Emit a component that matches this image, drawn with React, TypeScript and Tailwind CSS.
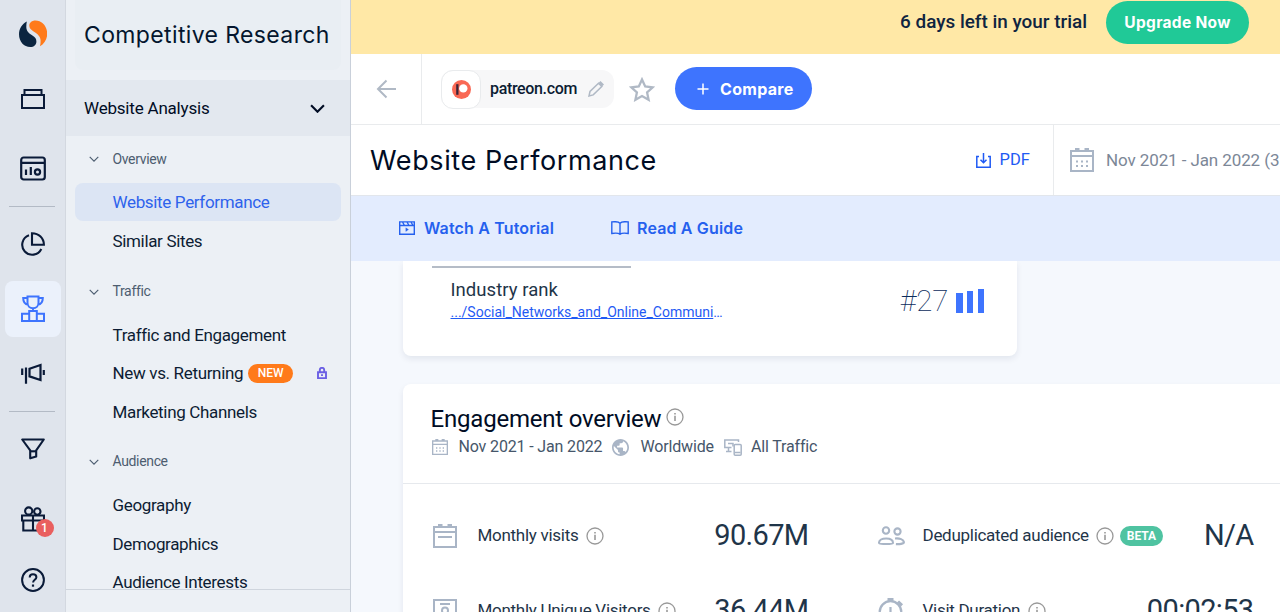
import type { ReactNode } from "react";
import clsx from "clsx";

interface IconProps {
  className?: string;
}

interface NavItem {
  label: string;
  active?: boolean;
  isNew?: boolean;
  locked?: boolean;
}

interface NavSection {
  title: string;
  spacing: string;
  items: NavItem[];
}

const sections: NavSection[] = [
  {
    title: "Overview",
    spacing: "mt-[4px]",
    items: [{ label: "Website Performance", active: true }, { label: "Similar Sites" }],
  },
  {
    title: "Traffic",
    spacing: "mt-[13px]",
    items: [
      { label: "Traffic and Engagement" },
      { label: "New vs. Returning", isNew: true, locked: true },
      { label: "Marketing Channels" },
    ],
  },
  {
    title: "Audience",
    spacing: "mt-[12px]",
    items: [{ label: "Geography" }, { label: "Demographics" }, { label: "Audience Interests" }],
  },
];

function LogoIcon() {
  return (
    <svg className="h-7 w-7" viewBox="0 0 28 28">
      <path d="M7.8 1.6C3 4.2 0 9 0 14.2 0 21.6 5 27 11.3 27c3.600 0 6.100-2.400 6.100-5.600 0-2.600-1.400-4.200-4-5.900C9.500 13 7.300 10.800 7.300 7c0-2 .2-3.700.5-5.400z" fill="#0b2540" />
      <path d="M21 26.300c4.300-2.500 7.200-7 7.200-12.500C28.200 6 22.900.4 16.400.4c-3.500 0-6.100 2.100-6.100 5.200 0 2.700 1.400 4 4.300 6 4.500 3 7 5 7 9.200 0 2-.1 3.700-.6 5.500z" fill="#ff7a1a" />
    </svg>
  );
}

function HomeIcon() {
  return (
    <svg className="h-6 w-6" viewBox="0 0 24 24" fill="none" stroke="#0a1a38" strokeWidth="2">
      <path d="M1 8h22v13H1zM3.500 8V3h17v5" />
    </svg>
  );
}

function DashboardIcon() {
  return (
    <svg className="h-[26px] w-[26px]" viewBox="0 0 26 26" fill="none" stroke="#0a1a38" strokeWidth="2.200">
      <rect x="1.200" y="2.500" width="23.600" height="22" rx="2.500" />
      <path d="M1 7.800h24M6 14.500V20M10.800 12v8" />
      <circle cx="17.500" cy="17" r="2.600" />
    </svg>
  );
}

function PieIcon() {
  return (
    <svg className="h-6 w-6" viewBox="0 0 24 24" fill="none" stroke="#0a1a38" strokeWidth="2.100">
      <path d="M11 1.200v11.600h11.900C22.900 6.300 17.800 1.200 11 1.200z" />
      <path d="M8 3.300A10 10 0 1 0 20.300 17" />
    </svg>
  );
}

function TrophyIcon() {
  return (
    <svg className="h-[28px] w-6" viewBox="0 0 24 28" fill="none" stroke="#3e74fe" strokeWidth="2">
      <path d="M6.500 1.500h11V8c0 3-2.500 5.200-5.500 5.200S6.500 11 6.500 8zM6.500 3H2.200c0 4 1.800 6.300 5 6.700M17.500 3h4.300c0 4-1.800 6.300-5 6.700M12 13.200v3" />
      <path d="M8.200 16h7.600v10H8.200zM8.200 18.700H1V26h7.200M15.800 18.700H23V26h-7.200" />
    </svg>
  );
}

function MegaphoneIcon() {
  return (
    <svg className="h-6 w-6" viewBox="0 0 24 24" fill="none" stroke="#0a1a38" strokeWidth="2.200">
      <path d="M8.500 6.800 19.500 3v15L8.500 14.400zM5 5.500v16.200M1.200 6.500V13M22.800 8v5" />
    </svg>
  );
}

function FunnelIcon() {
  return (
    <svg className="h-6 w-6" viewBox="0 0 24 24" fill="none" stroke="#0a1a38" strokeWidth="2.100" strokeLinejoin="round">
      <path d="M1.200 3.500h21.600l-7.600 10.800v6.200l-6 1.800v-8z" />
      <path d="M9.200 15.300h6" />
    </svg>
  );
}

function GiftIcon() {
  return (
    <svg className="h-[26px] w-6" viewBox="0 0 24 26" fill="none" stroke="#0a1a38" strokeWidth="2.100">
      <path d="M1 9.500h22v5H1zM2.300 14.500h19.500v10H2.300zM12 9.500v15" />
      <circle cx="7.700" cy="5" r="3.600" />
      <circle cx="16.300" cy="5.500" r="3.200" />
    </svg>
  );
}

function HelpIcon() {
  return (
    <svg className="h-6 w-6" viewBox="0 0 24 24" fill="none" stroke="#0a1a38" strokeWidth="2">
      <circle cx="12" cy="12" r="10.900" />
      <path d="M8.700 9.400C8.700 7.300 10 6.200 12 6.200s3.400 1.200 3.400 3c0 2.500-3.300 2.800-3.300 5.300" />
      <path d="M12 16.500v2.200" strokeWidth="2.200" />
    </svg>
  );
}

function ChevronIcon({ className }: IconProps) {
  return (
    <svg className={className} viewBox="0 0 14 8" fill="none" stroke="currentColor">
      <path d="M1 1l6 6 6-6" />
    </svg>
  );
}

function LockIcon() {
  return (
    <svg className="h-3 w-[10px]" viewBox="0 0 10 12" fill="none" stroke="#6b5fe4" strokeWidth="1.900">
      <path d="M1 5.200h8v5.900H1zM2.800 5V3a2.200 2.200 0 0 1 4.400 0v2" />
      <path d="M5 7.300v1.700" />
    </svg>
  );
}

function InfoIcon({ className }: IconProps) {
  return (
    <svg className={clsx("h-[18px] w-[18px]", className)} viewBox="0 0 18 18" fill="none" stroke="#999" strokeWidth="1.300">
      <circle cx="9" cy="9" r="8" />
      <path d="M9 7.700V13M9 5v1.500" strokeWidth="1.600" />
    </svg>
  );
}

function CalendarIcon({ className }: IconProps) {
  return (
    <svg className={className} viewBox="0 0 24 24" fill="none" stroke="#a9b5c6" strokeWidth="2">
      <path d="M1 3h22v20H1zM1 8h22" />
      <path d="M5 1.500h4.500M14.500 1.500H19" strokeWidth="3" />
      <path d="M6 13.500h2m3 0h2m3 0h2M6 18h2m3 0h2m3 0h2" strokeWidth="2" />
    </svg>
  );
}

function VisitsIcon() {
  return (
    <svg className="h-6 w-6" viewBox="0 0 24 24" fill="none" stroke="#a9b5c6" strokeWidth="2">
      <path d="M1 3h22v20H1zM1 8h22M5 13h14" />
      <path d="M5 1.500h4.500M14.500 1.500H19" strokeWidth="3" />
    </svg>
  );
}

function VisitorsIcon() {
  return (
    <svg className="h-6 w-6" viewBox="0 0 24 24" fill="none" stroke="#a9b5c6" strokeWidth="2">
      <path d="M1 1h22v22H1zM7 5h10" />
      <circle cx="12" cy="11.500" r="3" />
      <path d="M6 19.500c0-6 12-6 12 0" />
    </svg>
  );
}

function AudienceIcon() {
  return (
    <svg className="h-5 w-[27px]" viewBox="0 0 27 20" fill="none" stroke="#a9b5c6" strokeWidth="2.100">
      <circle cx="8" cy="4.500" r="3.200" />
      <circle cx="19.500" cy="5.500" r="3.100" />
      <path d="M1 17c0-3 3-4.500 7.200-4.500S15 14 15 17c0 1.300-14 1.300-14 0zM17 12.500c4.800-.5 8.500 1 8.900 3.500.2 2-4.900 2.300-8 2.100" />
    </svg>
  );
}

function StopwatchIcon() {
  return (
    <svg className="h-[26px] w-[26px]" viewBox="0 0 26 26" fill="none" stroke="#a9b5c6" strokeWidth="2.200">
      <circle cx="12.500" cy="14" r="10.800" />
      <path d="M12.500 9v6h4.500" />
      <path d="M9.500 1.500h6M20 3.500l4 3.800" strokeWidth="3" />
    </svg>
  );
}

function GlobeIcon() {
  return (
    <svg className="h-[17px] w-[17px]" viewBox="2 2 20 20" fill="#a9b5c6">
      <path d="M12 2C6.480 2 2 6.480 2 12s4.480 10 10 10 10-4.480 10-10S17.520 2 12 2zm-1 17.930c-3.950-.49-7-3.850-7-7.930 0-.62.080-1.210.21-1.790L9 15v1c0 1.100.9 2 2 2v1.930zm6.900-2.540c-.26-.81-1-1.390-1.900-1.390h-1v-3c0-.55-.45-1-1-1H8v-2h2c.55 0 1-.45 1-1V7h2c1.100 0 2-.9 2-2v-.41c2.930 1.190 5 4.060 5 7.410 0 2.080-.8 3.970-2.100 5.390z" />
    </svg>
  );
}

function DevicesIcon() {
  return (
    <svg className="h-[17px] w-[18px]" viewBox="0 0 18 17" fill="none" stroke="#a9b5c6" strokeWidth="1.500">
      <path d="M14.500 3V1H.8v7.500h6.700M4.500 8.500v3.800M2 12.500h5.500M4 4.500h5v3" />
      <rect x="10.200" y="5.500" width="7" height="10.700" rx="1" />
      <path d="M11 13.500h5.500" />
    </svg>
  );
}

function PatreonIcon() {
  return (
    <svg className="h-[19px] w-[19px]" viewBox="0 0 19 19">
      <circle cx="9.500" cy="9.500" r="9.500" fill="#f96854" />
      <path d="M4.200 4.200h2.300v10.600H4.200z" fill="#3a2438" />
      <circle cx="11.300" cy="8.400" r="4.200" fill="#fff" />
    </svg>
  );
}

function RailSlot({ className, children }: { className: string; children: ReactNode }) {
  return <div className={clsx("flex shrink-0 items-center justify-center", className)}>{children}</div>;
}

function Rail() {
  return (
    <nav className="flex w-[66px] shrink-0 flex-col items-center border-r border-[#d3d8e0] bg-[#dfe4ec]">
      <RailSlot className="h-[68px]"><LogoIcon /></RailSlot>
      <RailSlot className="h-[61px]"><HomeIcon /></RailSlot>
      <RailSlot className="h-[77px]"><DashboardIcon /></RailSlot>
      <div className="mr-px h-px w-[46px] shrink-0 bg-[#b3bac5]" />
      <RailSlot className="h-[73px]"><PieIcon /></RailSlot>
      <RailSlot className="mt-px h-14 w-14 rounded-lg bg-[#ebf1fb]"><TrophyIcon /></RailSlot>
      <RailSlot className="h-[74px]"><MegaphoneIcon /></RailSlot>
      <div className="mr-px h-px w-[46px] shrink-0 bg-[#b3bac5]" />
      <RailSlot className="h-[72px]"><FunnelIcon /></RailSlot>
      <RailSlot className="h-[70px]">
        <div className="relative">
          <GiftIcon />
          <span className="absolute top-[13px] left-[15px] flex h-[18px] w-[18px] items-center justify-center rounded-full bg-[#e95f5f] text-[12px] font-medium text-white">
            1
          </span>
        </div>
      </RailSlot>
      <RailSlot className="h-[52px]"><HelpIcon /></RailSlot>
    </nav>
  );
}

function Sidebar() {
  return (
    <aside className="flex w-[285px] shrink-0 flex-col border-r border-[#c9d0da] bg-[#ecf0f5]">
      <div className="mx-[9px] flex h-[70px] shrink-0 items-center rounded-b-lg bg-[#e9eef3] pl-[9px] font-['Inter',sans-serif] text-[23px] tracking-[0.37px] whitespace-nowrap text-[#04162e]">
        Competitive Research
      </div>
      <div className="mt-[10px] flex h-14 shrink-0 items-center justify-between bg-[#e3e8ef] pr-[25px] pl-[18px] text-[17px] tracking-[-0.2px] text-[#000c24]">
        <span className="mt-px">Website Analysis</span>
        <ChevronIcon className="h-[9px] w-[15px] stroke-2" />
      </div>
      <div className="h-[454px] shrink-0 overflow-hidden border-b border-[#cfd5dd]">
        {sections.map((section) => (
          <section key={section.title} className={section.spacing}>
            <h4 className="flex h-[38px] items-center pl-[23px] text-[14px] tracking-[-0.35px] text-[#4d5d70]">
              <ChevronIcon className="mr-[13.500px] h-[6px] w-[10px] stroke-[1.6]" />
              {section.title}
            </h4>
            <ul className="mt-[5px]">
              {section.items.map((item) => (
                <li
                  key={item.label}
                  className={clsx(
                    "mx-[9px] mb-[0.6px] flex h-[38px] items-center rounded-lg pt-[2px] pl-[37.500px] text-[17px] tracking-[-0.34px] whitespace-nowrap",
                    item.active ? "bg-[#dce5f4] text-[#2e62ec]" : "text-[#0c1c33]"
                  )}
                >
                  {item.label}
                  {item.isNew && (
                    <span className="mb-[2px] ml-[5px] flex h-[19px] items-center rounded-full bg-[#ff7a1a] px-[9.500px] text-[12px] font-medium tracking-normal text-white">
                      NEW
                    </span>
                  )}
                  {item.locked && (
                    <span className="mr-[14px] mb-[2px] ml-auto">
                      <LockIcon />
                    </span>
                  )}
                </li>
              ))}
            </ul>
          </section>
        ))}
      </div>
      <div className="h-[22px] shrink-0 overflow-hidden pt-[17px] pl-[98px] text-[16px] text-[#0c1c33]">Updates</div>
    </aside>
  );
}

function TrialBanner() {
  return (
    <div className="flex h-[54px] shrink-0 justify-end bg-[#ffe8a6] pr-[31px]">
      <span className="mt-2 mr-[19px] text-[18.900px] leading-[27px] font-medium text-[#0f2440]">6 days left in your trial</span>
      <button className="mt-px flex h-[43px] w-[143px] items-center justify-center rounded-full bg-[#20c997] font-['Inter',sans-serif] text-[15.500px] font-bold tracking-[0.3px] text-white">
        Upgrade Now
      </button>
    </div>
  );
}

function SiteBar() {
  return (
    <div className="flex h-[71px] shrink-0 items-center border-b border-[#e9ebed] bg-white">
      <div className="flex h-full w-[71px] items-center justify-center border-r border-[#e9ebed]">
        <svg className="h-5 w-5" viewBox="0 0 20 20" fill="none" stroke="#b0b9c5" strokeWidth="2">
          <path d="M20 10H2M10.500 1.500L2 10l8.500 8.500" />
        </svg>
      </div>
      <div className="ml-[19px] flex h-[38px] w-[173px] items-center rounded-xl bg-[#f7f7f8]">
        <span className="flex h-[39px] w-[40px] items-center justify-center rounded-xl border border-[#e9ebed] bg-white">
          <PatreonIcon />
        </span>
        <span className="ml-[9px] text-[16px] font-medium tracking-[-0.35px] text-[#0c1c33]">patreon.com</span>
        <svg className="mr-[10px] ml-auto h-4 w-4" viewBox="0 0 16 16" fill="none" stroke="#b0b9c5" strokeWidth="1.500">
          <path d="M1 15l1-4.500 8.500-8.300 3.300 3.300-8.600 8.400z" />
          <path d="M11.500 1l3.500 3.500" strokeWidth="2.800" />
        </svg>
      </div>
      <svg className="ml-[15px] h-[25px] w-[26px]" viewBox="0 0 26 25" fill="none" stroke="#b0b9c5" strokeWidth="2.300">
        <path d="M13 2.500l3.200 7 7.500.8-5.600 5.100 1.500 7.400L13 19l-6.600 3.800 1.500-7.400-5.600-5.100 7.500-.8z" />
      </svg>
      <button className="mb-px ml-5 flex h-[43px] w-[137px] items-center rounded-full bg-[#3e74fe] pl-[22px] font-['Inter',sans-serif] text-[16px] font-bold tracking-[0.3px] text-white">
        <svg className="mr-[11px] h-3 w-3" viewBox="0 0 12 12" stroke="#fff" strokeWidth="1.500">
          <path d="M6 .5v11M.5 6h11" />
        </svg>
        Compare
      </button>
    </div>
  );
}

function TitleBar() {
  return (
    <div className="flex h-[71px] shrink-0 items-center overflow-hidden border-b border-[#e2e6ec] bg-white whitespace-nowrap">
      <h1 className="mt-[2px] ml-[19px] font-['Inter',sans-serif] text-[27px] tracking-[0.6px] text-[#000c24]">Website Performance</h1>
      <div className="ml-auto flex h-full w-[78px] shrink-0 items-center border-r border-[#e9ebed] text-[16.500px] text-[#1f5af4]">
        <svg className="mr-[8.500px] h-[15px] w-[15px]" viewBox="0 0 15 15" fill="none" stroke="currentColor" strokeWidth="1.500">
          <path d="M3 3.500H.8v10.700h13.400V3.500H12M7.500 0v9.500M4.500 6.800l3 3 3-3" />
        </svg>
        <span className="mt-px">PDF</span>
      </div>
      <div className="flex w-[226px] shrink-0 items-center overflow-hidden pl-4 text-[17px] tracking-[-0.1px] text-[#7c8797]">
        <CalendarIcon className="mr-3 h-6 w-6 shrink-0" />
        <span className="mt-px">Nov 2021 - Jan 2022 (3 Months)</span>
      </div>
    </div>
  );
}

function HelpBar() {
  return (
    <div className="flex h-[65px] shrink-0 items-center bg-[#e3ecfe] pb-px pl-12 font-['Inter',sans-serif] text-[16px] font-semibold tracking-[0.16px] text-[#2560ee]">
      <svg className="mr-[9px] h-[14px] w-4" viewBox="0 0 16 14" fill="none" stroke="currentColor" strokeWidth="1.400">
        <path d="M.7.900h14.600v12.400H.7zM.7 4.500h14.600M3.500 1l2 3.500M8 1l2 3.500M12 1l2 3.500" />
        <path d="M6.800 6.800v3.600L9.500 8.600z" fill="currentColor" strokeWidth=".3" />
      </svg>
      <span className="w-[187px]">Watch A Tutorial</span>
      <svg className="mr-2 h-[14px] w-[18px]" viewBox="0 0 18 14" fill="none" stroke="currentColor" strokeWidth="1.400">
        <path d="M9 2.200C7.500.5 4 .5.800.900v11.600C4 12 7.500 12 9 13.300c1.500-1.300 5-1.300 8.200-.8V.900C14 .5 10.500.5 9 2.200zM9 2.200v11" />
      </svg>
      Read A Guide
    </div>
  );
}

function RankCard() {
  return (
    <div className="h-[95px] w-[614.500px] shrink-0 rounded-b-lg bg-white shadow-[0_3px_6px_rgba(14,30,62,0.08)]">
      <div className="ml-[29px] h-[7px] w-[199.500px] border-b-2 border-[#b5bcc7]" />
      <div className="flex pr-[33.500px] pl-[48px]">
        <div className="pt-[10px]">
          <div className="text-[18.500px] leading-6 tracking-[0.05px] text-[#1f3549]">Industry rank</div>
          <div className="text-[14px] leading-[21px] text-[#1f5af4]">
            <span className="underline">.../Social_Networks_and_Online_Communi</span>…
          </div>
        </div>
        <div className="ml-auto flex items-center pt-[10px]">
          <span className="text-[29.500px] leading-8 font-thin text-[#0c2c5c]">#27</span>
          <svg className="ml-[7px] h-6 w-7" viewBox="0 0 28 24" fill="#3e74fe">
            <path d="M0 4h7v20H0zM11 2h6v22h-6zM22 0h6v24h-6z" />
          </svg>
        </div>
      </div>
    </div>
  );
}

interface MetricProps {
  icon: ReactNode;
  label: string;
  value: string;
  beta?: boolean;
}

function Metric({ icon, label, value, beta }: MetricProps) {
  return (
    <div className="flex h-[75px] items-center whitespace-nowrap text-[#1f3549]">
      <span className="flex w-[45px] shrink-0 items-center">{icon}</span>
      <span className="text-[17px] tracking-[-0.28px]">{label}</span>
      <InfoIcon className="ml-[7.500px]" />
      {beta && (
        <span className="ml-[6px] flex h-[20px] items-center rounded-full bg-[#4fc3a1] px-[6.500px] text-[12px] font-bold text-white">
          BETA
        </span>
      )}
      <span className="ml-auto text-[29px] tracking-[-0.65px] text-[#1f3549]">{value}</span>
    </div>
  );
}

function EngagementCard() {
  return (
    <div className="mt-7 w-[940px] shrink-0 rounded-lg bg-white shadow-[0_3px_6px_rgba(14,30,62,0.08)]">
      <div className="h-[100px] border-b border-[#e6e9ed] pt-5 pl-[28px] whitespace-nowrap">
        <h2 className="flex h-[30px] items-center text-[24px] tracking-[-0.2px] text-[#000c24]">
          Engagement overview
          <InfoIcon className="mb-1 ml-[5px]" />
        </h2>
        <div className="flex h-[26px] items-center text-[16px] tracking-[-0.15px] text-[#46566a]">
          <CalendarIcon className="mr-[11px] ml-px h-4 w-4" />
          Nov 2021 - Jan 2022
          <span className="mr-[11px] ml-[10px]"><GlobeIcon /></span>
          Worldwide
          <span className="mr-[9px] ml-[10px]"><DevicesIcon /></span>
          All Traffic
        </div>
      </div>
      <div className="grid grid-cols-[376px_376px] gap-x-[69px] pt-[14px] pl-[30px]">
        <Metric icon={<VisitsIcon />} label="Monthly visits" value="90.67M" />
        <Metric icon={<AudienceIcon />} label="Deduplicated audience" value="N/A" beta />
        <Metric icon={<VisitorsIcon />} label="Monthly Unique Visitors" value="36.44M" />
        <Metric icon={<StopwatchIcon />} label="Visit Duration" value="00:02:53" />
      </div>
    </div>
  );
}

export default function App() {
  return (
    <div className="flex h-[612px] w-[1280px] overflow-hidden bg-[#f5f8fd] font-[Roboto,sans-serif]">
      <Rail />
      <Sidebar />
      <main className="flex min-w-0 flex-1 flex-col overflow-hidden">
        <TrialBanner />
        <SiteBar />
        <TitleBar />
        <HelpBar />
        <div className="flex min-h-0 flex-1 flex-col overflow-hidden pl-[51.500px]">
          <RankCard />
          <EngagementCard />
        </div>
      </main>
    </div>
  );
}
